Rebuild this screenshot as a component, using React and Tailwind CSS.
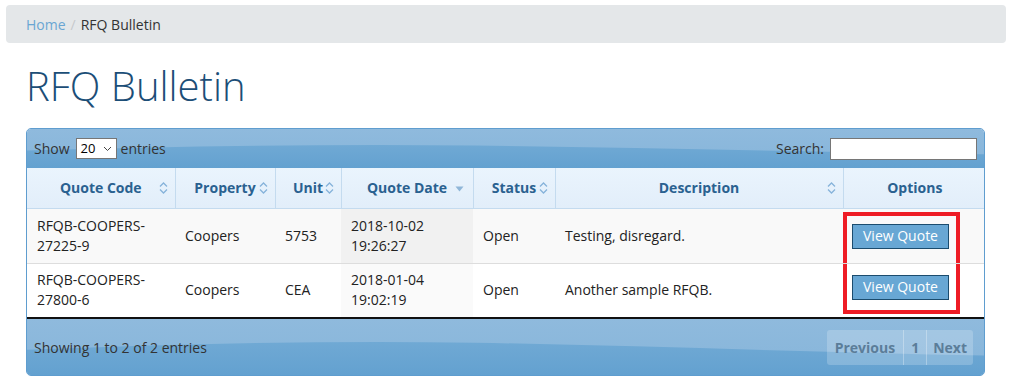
import React from 'react';

const COLS = [
  { key: 'code', label: 'Quote Code', w: 148, sort: 'both' },
  { key: 'prop', label: 'Property', w: 100, sort: 'both' },
  { key: 'unit', label: 'Unit', w: 66, sort: 'both' },
  { key: 'date', label: 'Quote Date', w: 132, sort: 'desc' },
  { key: 'status', label: 'Status', w: 82, sort: 'both' },
  { key: 'desc', label: 'Description', w: 288, sort: 'both' },
  { key: 'opt', label: 'Options', w: 143, sort: null },
];

const ROWS = [
  { code: ['RFQB-COOPERS-', '27225-9'], prop: 'Coopers', unit: '5753', date: ['2018-10-02', '19:26:27'], status: 'Open', desc: 'Testing, disregard.' },
  { code: ['RFQB-COOPERS-', '27800-6'], prop: 'Coopers', unit: 'CEA', date: ['2018-01-04', '19:02:19'], status: 'Open', desc: 'Another sample RFQB.' },
];

function SortIcon({ dir }) {
  if (dir === 'desc') {
    return (
      <svg width="9" height="6" viewBox="0 0 9 6" className="absolute right-[9px] top-[18px]">
        <path d="M0.5 0.5 L8.5 0.5 L4.5 5.5 Z" fill="#8fb6d8" />
      </svg>
    );
  }
  return (
    <svg width="9" height="12" viewBox="0 0 9 12" className="absolute right-[7px] top-[14px]">
      <path d="M1 4.5 L4.5 1 L8 4.5 M1 7.5 L4.5 11 L8 7.5" fill="none" stroke="#86b3da" strokeWidth="1.3" />
    </svg>
  );
}

function Wave() {
  return (
    <svg className="absolute inset-0 h-full w-full" viewBox="0 0 959 40" preserveAspectRatio="none">
      <defs>
        <linearGradient id="gTop" x1="0" y1="0" x2="0" y2="1">
          <stop offset="0" stopColor="#8fbadd" />
          <stop offset="1" stopColor="#86b5da" />
        </linearGradient>
        <linearGradient id="gBot" x1="0" y1="0" x2="0" y2="1">
          <stop offset="0" stopColor="#70a9d4" />
          <stop offset="1" stopColor="#63a1d0" />
        </linearGradient>
      </defs>
      <rect x="0" y="0" width="959" height="40" fill="url(#gTop)" />
      <path d="M0 22 C150 18 300 15 450 17 C620 19 800 24 959 26 L959 40 L0 40 Z" fill="url(#gBot)" />
    </svg>
  );
}

export default function App() {
  return (
    <div className="min-h-[386px] bg-white px-[6px] pt-[5px] text-[14px] text-[#222]" style={{ fontFamily: '"Open Sans", "Noto Sans", sans-serif' }}>
      {/* Breadcrumb */}
      <div className="flex h-[38px] w-[1000px] items-center rounded-[4px] bg-[#e4e7e9] pl-[20px]">
        <span className="text-[#6aa6d3]">Home</span>
        <span className="px-[5px] text-[#c6c9cc]">/</span>
        <span className="text-[#333]">RFQ Bulletin</span>
      </div>

      <div className="pl-[20px]">
        <h1 className="mt-[18px] mb-[18px] text-[40px] font-light leading-[49px] text-[#1c4e77]">RFQ Bulletin</h1>

        <div className="w-[959px] overflow-hidden rounded-[5px] border border-[#5f9dcf]">
          {/* Toolbar */}
          <div className="relative h-[39px]">
            <Wave />
            <div className="relative flex h-full items-center justify-between px-[7px] text-[#333]">
              <div className="flex items-center">
                <span>Show</span>
                <div className="ml-[6px] mr-[4px] flex h-[21px] w-[41px] items-center justify-between border border-[#767676] bg-white pl-[4px] pr-[4px] text-[13px] text-black">
                  <span>20</span>
                  <svg width="9" height="6" viewBox="0 0 9 6">
                    <path d="M1 1 L4.5 4.5 L8 1" fill="none" stroke="#444" strokeWidth="1" />
                  </svg>
                </div>
                <span>entries</span>
              </div>
              <div className="flex items-center">
                <span>Search:</span>
                <div className="ml-[6px] h-[22px] w-[147px] border border-[#767676] bg-white" />
              </div>
            </div>
          </div>

          <table className="w-full table-fixed border-collapse">
            <colgroup>
              {COLS.map(c => <col key={c.key} style={{ width: c.w }} />)}
            </colgroup>
            <thead>
              <tr className="h-[40px] bg-gradient-to-b from-[#eaf4fd] to-[#e2eefa]">
                {COLS.map((c, i) => (
                  <th
                    key={c.key}
                    className={`relative border-b border-[#c4dbef] text-center font-bold text-[#2a6190] ${i < COLS.length - 1 ? 'border-r' : ''}`}
                  >
                    {c.label}
                    {c.sort && <SortIcon dir={c.sort} />}
                  </th>
                ))}
              </tr>
            </thead>
            <tbody>
              {ROWS.map((r, ri) => (
                <tr
                  key={ri}
                  className={`h-[55px] leading-[20px] ${ri === 0 ? 'bg-[#f9f9f9] border-b border-[#dddddd]' : 'bg-white border-b-2 border-[#111]'}`}
                >
                  <td className="pl-[10px]">{r.code[0]}<br />{r.code[1]}</td>
                  <td className="pl-[10px]">{r.prop}</td>
                  <td className="pl-[10px]">{r.unit}</td>
                  <td className={`pl-[10px] ${ri === 0 ? 'bg-[#f1f1f1]' : 'bg-[#fafafa]'}`}>{r.date[0]}<br />{r.date[1]}</td>
                  <td className="pl-[10px]">{r.status}</td>
                  <td className="pl-[10px]">{r.desc}</td>
                  <td className={`relative ${ri === 0 ? 'align-bottom' : 'align-top'}`}>
                    <div className={`ml-[0px] w-[117px] border-x-4 border-[#ee1c25] ${ri === 0 ? 'h-[51px] border-t-4 pt-[8px]' : 'h-[50px] border-b-4 pt-[11px]'}`}>
                      <button className="ml-[5px] h-[25px] w-[97px] border border-[#1b4c6e] bg-[#68a7d4] text-[14px] leading-[22px] text-white">
                        View Quote
                      </button>
                    </div>
                  </td>
                </tr>
              ))}
            </tbody>
          </table>

          {/* Footer */}
          <div className="relative h-[56px]">
            <Wave />
            <div className="relative flex h-full items-center justify-between pl-[7px] pr-[11px] text-[#333]">
              <span>Showing 1 to 2 of 2 entries</span>
              <div className="flex h-[35px] items-stretch overflow-hidden rounded-[3px] bg-white/20 font-bold text-[#5b7d99]">
                <span className="flex items-center px-[8px]">Previous</span>
                <span className="flex items-center border-x border-white/30 px-[7px]">1</span>
                <span className="flex items-center px-[6px]">Next</span>
              </div>
            </div>
          </div>
        </div>
      </div>
    </div>
  );
}
